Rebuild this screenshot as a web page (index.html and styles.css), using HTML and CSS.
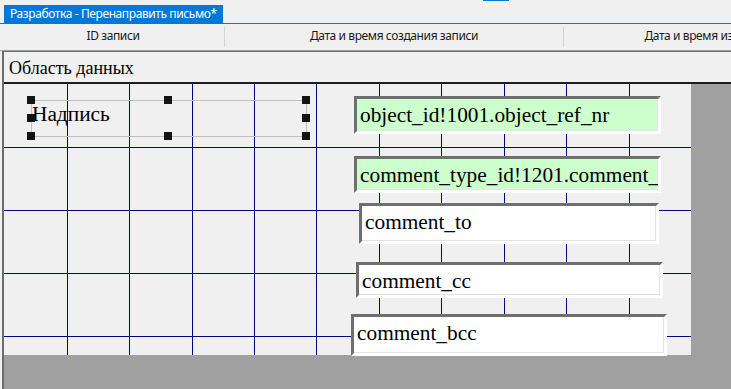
FILE: index.html
```html
<!DOCTYPE html>
<html lang="ru">
<head>
<meta charset="utf-8">
<title>Разработка - Перенаправить письмо</title>
<link rel="stylesheet" href="styles.css">
</head>
<body>
<div class="app">
  <div class="topstrip"><span class="mark"></span></div>
  <div class="tabbar"><div class="tab">Разработка - Перенаправить письмо*</div></div>
  <div class="colheader">
    <div class="col c1">ID записи</div>
    <div class="sep"></div>
    <div class="col c2">Дата и время создания записи</div>
    <div class="sep"></div>
    <div class="col c3">Дата и время изменения записи</div>
  </div>
  <div class="designer">
    <div class="section">Область данных</div>
    <div class="body">
      <div class="canvas">
        <svg class="grid" width="687" height="271" viewBox="0 0 687 271" shape-rendering="crispEdges">
          <g stroke="#000080" stroke-width="1">
            <line x1="63.5" y1="0" x2="63.5" y2="271"/>
            <line x1="125.5" y1="0" x2="125.5" y2="271"/>
            <line x1="188.5" y1="0" x2="188.5" y2="271"/>
            <line x1="250.5" y1="0" x2="250.5" y2="271"/>
            <line x1="312.5" y1="0" x2="312.5" y2="271"/>
            <line x1="375.5" y1="0" x2="375.5" y2="271"/>
            <line x1="437.5" y1="0" x2="437.5" y2="271"/>
            <line x1="500.5" y1="0" x2="500.5" y2="271"/>
            <line x1="562.5" y1="0" x2="562.5" y2="271"/>
            <line x1="625.5" y1="0" x2="625.5" y2="271"/>
            <line x1="0" y1="63.5" x2="687" y2="63.5"/>
            <line x1="0" y1="126.5" x2="687" y2="126.5"/>
            <line x1="0" y1="189.5" x2="687" y2="189.5"/>
            <line x1="0" y1="252.5" x2="687" y2="252.5"/>
          </g>
        </svg>
        <div class="label">Надпись</div>
        <div class="selbox"></div>
        <div class="h hx1 hy1"></div>
        <div class="h hx2 hy1"></div>
        <div class="h hx3 hy1"></div>
        <div class="h hx1 hy2"></div>
        <div class="h hx3 hy2"></div>
        <div class="h hx1 hy3"></div>
        <div class="h hx2 hy3"></div>
        <div class="h hx3 hy3"></div>
        <div class="tb green tb1">object_id!1001.object_ref_nr</div>
        <div class="tb green tb2">comment_type_id!1201.comment_type_name</div>
        <div class="tb tb3">comment_to</div>
        <div class="tb tb4">comment_cc</div>
        <div class="tb tb5">comment_bcc</div>
      </div>
    </div>
  </div>
</div>
</body>
</html>
```
FILE: styles.css
```css
html, body {
  margin: 0;
  padding: 0;
  background: #f0f0f0;
  overflow: hidden;
}
.app {
  width: 731px;
  height: 389px;
  display: flex;
  flex-direction: column;
  overflow: hidden;
}
.topstrip {
  flex: none;
  height: 5px;
  box-sizing: border-box;
  padding-left: 483px;
}
.mark {
  display: block;
  width: 26px;
  height: 1px;
  background: #0078d7;
}
.tabbar {
  flex: none;
  height: 18px;
  border-bottom: 1px solid #0078d7;
  display: flex;
  padding-left: 4px;
}
.tab {
  width: 219px;
  box-sizing: border-box;
  padding-left: 6px;
  background: #0078d7;
  color: #ffffff;
  font: 12px/18px "Noto Sans", sans-serif;
  letter-spacing: -0.4px;
  white-space: nowrap;
  overflow: hidden;
}
.colheader {
  flex: none;
  height: 26px;
  border-bottom: 1px solid #a0a0a0;
  display: flex;
  align-items: center;
  overflow: hidden;
  font: 12px/24px "Noto Sans", sans-serif;
  letter-spacing: -0.4px;
  color: #1a1a1a;
  white-space: nowrap;
}
.col {
  flex: none;
  height: 26px;
  box-sizing: border-box;
  padding-bottom: 2px;
  text-align: center;
}
.c1 { width: 222px; margin-left: 2px; }
.c2 { width: 338px; }
.c3 { width: 339px; }
.sep {
  flex: none;
  width: 1px;
  height: 20px;
  background: #d6d2da;
}
.designer {
  flex: 1;
  min-height: 0;
  margin-left: 2px;
  border-left: 2px solid #6d6d6d;
  border-top: 1px solid #6d6d6d;
  display: flex;
  flex-direction: column;
}
.section {
  flex: none;
  height: 28px;
  padding: 2px 0 0 5px;
  border-bottom: 2px solid #1e1e1e;
  font: 18px/28px "Liberation Serif", serif;
  color: #000;
  white-space: nowrap;
}
.body {
  flex: 1;
  background: #a0a0a0;
  display: flex;
  align-items: flex-start;
}
.canvas {
  flex: none;
  position: relative;
  width: 687px;
  height: 271px;
  background: #f0f0f0;
}
.grid {
  position: absolute;
  left: 0;
  top: 0;
  display: block;
}
.label {
  position: absolute;
  left: 27px;
  top: 16px;
  width: 275px;
  height: 36px;
  box-sizing: border-box;
  padding: 2px 0 0 1px;
  font: 21.33px/24px "Liberation Serif", serif;
  color: #000;
  white-space: nowrap;
}
.selbox {
  position: absolute;
  left: 27px;
  top: 16px;
  width: 276px;
  height: 37px;
  box-sizing: border-box;
  border: 1px solid #c0c0c0;
}
.h {
  position: absolute;
  width: 8px;
  height: 8px;
  background: #141414;
}
.hx1 { left: 23px; }
.hx2 { left: 160px; }
.hx3 { left: 298px; }
.hy1 { top: 12px; }
.hy2 { top: 30px; }
.hy3 { top: 48px; }
.tb {
  position: absolute;
  box-sizing: border-box;
  border: 3px solid;
  border-color: #6f6f6f #ffffff #ffffff #6f6f6f;
  box-shadow: inset -1px -1px 0 #e3e3e3;
  background: #ffffff;
  padding: 4px 0 0 3px;
  font: 21.33px/24px "Liberation Serif", serif;
  color: #000;
  white-space: nowrap;
  overflow: hidden;
}
.green { background: #ccffcc; }
.tb1 { left: 350px; top: 12px; width: 307px; height: 38px; }
.tb2 { left: 350px; top: 72px; width: 307px; height: 37px; }
.tb3 { left: 355px; top: 119px; width: 300px; height: 41px; }
.tb4 { left: 352px; top: 178px; width: 307px; height: 36px; }
.tb5 { left: 347px; top: 230px; width: 316px; height: 42px; }
```
